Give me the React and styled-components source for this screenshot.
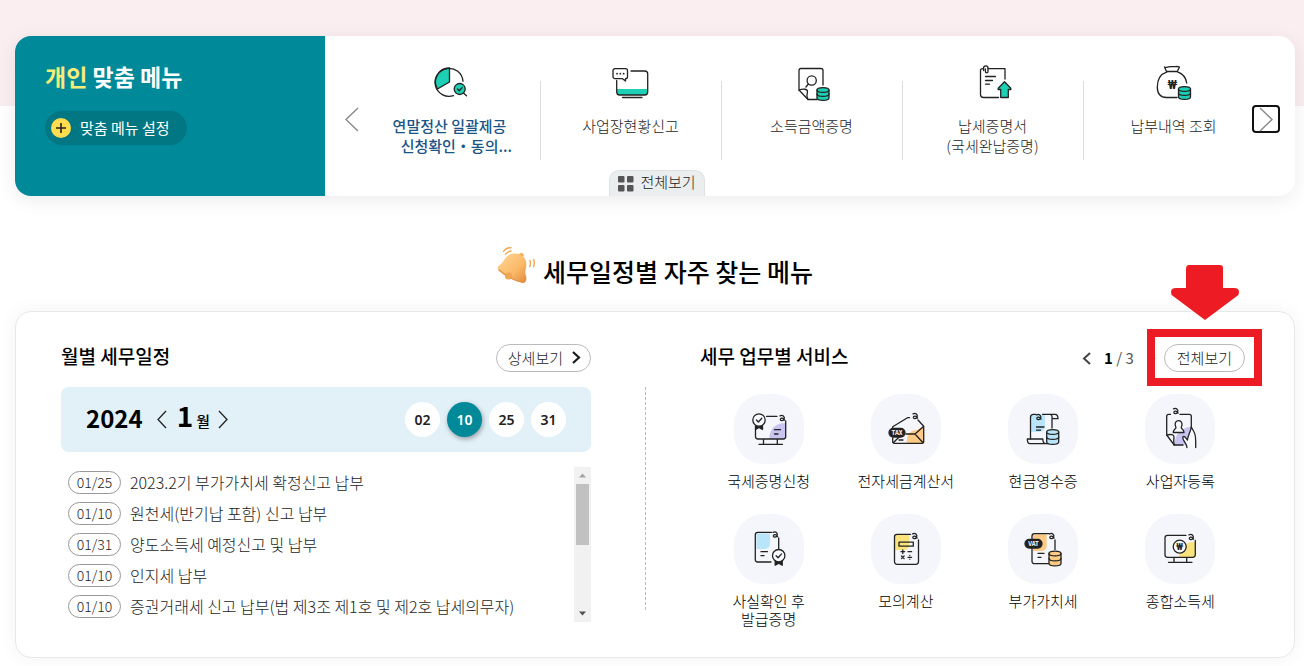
import styled, { createGlobalStyle, css, ThemeProvider } from 'styled-components';

const theme = {
  colors: {
    teal: '#008998',
    tealDark: '#007783',
    yellow: '#ffdd4f',
    ink: '#222222',
    text: '#1c1c1c',
    blue: '#1b5486',
    sky: '#e2f0f8',
    bubble: '#f5f6fb',
    red: '#ed1c24',
  },
};

const line = {
  fill: 'none',
  stroke: '#222',
  strokeWidth: 1.3,
  strokeLinecap: 'round',
  strokeLinejoin: 'round',
};

/* shared icon parts */

const Coins = ({ x, y, h = 9, color = '#1dcfb4' }) => (
  <g fill={color}>
    <path
      d={`M${x - 6} ${y}v${h}c0 3.2 12 3.2 12 0v-${h}`}
    />
    <ellipse cx={x} cy={y} rx="6" ry="2.4" />
    <path
      fill="none"
      d={`M${x - 6} ${y + h / 2}c0 3.2 12 3.2 12 0`}
    />
  </g>
);

const Curl = ({ x, y }) => (
  <path
    d={`M${x - 2.5} ${y - 2.6}c3-1.4 5.200 1 4 3.400c-1.200 2-4 1.600-3.600-.2c.3-1.600 3-1.400 4.200 1`}
  />
);

const Medal = ({ x, y }) => (
  <g>
    <path
      fill="#222"
      d={`M${x - 3.500} ${y + 5}v4.500l3.500-2l3.500 2v-4.500z`}
    />
    <circle cx={x} cy={y} r="6.200" fill="#f9fafd" />
    <path d={`M${x - 2.600} ${y}l2 2l3.400-3.800`} />
  </g>
);

const Won = ({ x, y, size }) => (
  <text
    x={x}
    y={y}
    fontFamily="Roboto, sans-serif"
    fontSize={size}
    fontWeight="700"
    textAnchor="middle"
    fill="#222"
    stroke="none"
  >
    ₩
  </text>
);

const PieIcon = () => (
  <svg width="40" height="40" viewBox="0 0 40 40" {...line}>
    <path fill="#1dcfb4" d="M19.500 20V6A14 14 0 0 0 7.400 27z" />
    <path d="M33 19.300A14 14 0 1 0 23.500 33.600" />
    <circle cx="29.700" cy="27" r="5.500" fill="#1dcfb4" />
    <path d="M33.500 31l3 2.800M27.500 27l1.700 1.700l2.800-3" />
  </svg>
);

const BusinessIcon = () => (
  <svg width="40" height="40" viewBox="0 0 40 40" {...line}>
    <path fill="#1dcfb4" stroke="none" d="M6 27h30.500v3a3 3 0 0 1-3 3H9a3 3 0 0 1-3-3z" />
    <path d="M5.700 18.500V30a3 3 0 0 0 3 3h25a3 3 0 0 0 3-3V12a3 3 0 0 0-3-3H20M11.500 35.500h19.500" />
    <path d="M4 6.700h10.500a2 2 0 0 1 2 2v6a2 2 0 0 1-2 2v2.400l-3-2.400H4a2 2 0 0 1-2-2v-6a2 2 0 0 1 2-2z" />
    <path strokeWidth="1.700" d="M6 11.700h.1M9.300 11.700h.1M12.600 11.700h.1" />
  </svg>
);

const IncomeIcon = () => (
  <svg width="40" height="40" viewBox="0 0 40 40" {...line}>
    <path d="M31 23V8.500a2 2 0 0 0-2-2H9a2 2 0 0 0-2 2V28l9 9.500h9" />
    <path d="M7 28c4-1.500 8.500-1 8.500 1.500c-.8 2.500-1 5 .5 8" />
    <circle cx="19.700" cy="18.500" r="4.600" />
    <path d="M16.400 22l-2.500 3" />
    <Coins x={31} y={28} h={8} />
  </svg>
);

const TaxPaperIcon = () => (
  <svg width="40" height="40" viewBox="0 0 40 40" {...line}>
    <path d="M9.500 6.700a2 2 0 0 0-2 2v23.800a3 3 0 0 0 3 3h15M15 6.700h17V17" />
    <path d="M10.600 8.500V6a2.200 2.200 0 0 1 4.400 0v3.600a1.300 1.300 0 0 1-2.600 0V7" />
    <path d="M12.500 14.500h10M12.500 18.500h7M12.500 22.200h4" />
    <path fill="#1dcfb4" d="M31.500 19.700l6.300 6.500v1.300h-2.500v8h-7.600v-8h-2.500v-1.300z" />
  </svg>
);

const MoneyBagIcon = () => (
  <svg width="40" height="40" viewBox="0 0 40 40" {...line}>
    <path d="M12.500 9.500L10.500 5c3 1.200 4.500-.8 7.500-.4c3 .4 4.500-.8 7.500.4l-2.200 4.500z" />
    <path d="M13 9.800C6.500 12 3.300 18 3.300 25c0 7 3.500 10.500 9.200 10.500H23M23.500 9.800c5 1.700 8.500 6 9.200 11.200" />
    <Won x={18.3} y={26.5} size={12} />
    <Coins x={30.500} y={27} h={8} />
  </svg>
);

/* service icons share a 70 x 70 bubble */

const CertificateIcon = () => (
  <svg viewBox="0 0 70 70" {...line}>
    <path fill="#c9c3f0" stroke="none" d="M35.300 45c0-10 6-16 16.400-16v16z" />
    <path d="M32.500 22.300H43M51.700 27v15.500a2.500 2.500 0 0 1-2.500 2.500H24a2.500 2.500 0 0 1-2.500-2.500V35M29.500 45v5.300M43.300 45v5.300M25 50.300h23.500M40.500 35.700h6M40.500 40h3.500" />
    <Curl x={48.500} y={24.500} />
    <Medal x={25} y={26} />
  </svg>
);

const TaxInvoiceIcon = () => (
  <svg viewBox="0 0 70 70" {...line}>
    <path fill="#ffca85" stroke="none" d="M35.700 49.300c0-8 3-13 9.500-13l7.500-4v17z" />
    <path d="M21.700 34v-1.300L36.500 23.700l2 0M47 26l5.700 6.300v15a2 2 0 0 1-2 2H23.700a2 2 0 0 1-2-2V44" />
    <path d="M35 40h9l8.500-7.500M44 40l8 8.700M22.300 48.700l6-6M28 46h4" />
    <Curl x={44.500} y={22.500} />
    <rect x="18" y="34.500" width="16" height="8.500" rx="4.200" fill="#222" />
    <text x="26" y="41" fontSize="6" fontWeight="700" textAnchor="middle" fill="#fff" stroke="none">TAX</text>
  </svg>
);

const CashReceiptIcon = () => (
  <svg viewBox="0 0 70 70" {...line}>
    <path fill="#b9e5fa" stroke="none" d="M23 21h14v11a6 6 0 0 1-6 6h-8z" />
    <path d="M28 20.300h-2.500a3 3 0 0 0-3 3V45M34.500 20.300H47c2 0 3 2 3 4.400h-5.800c0-2.400-.6-3.800-1.700-4.400M44 25v9M28.500 33h7.500M28.500 36.200h4" />
    <path d="M19.300 45h15.500c0 3 1 4.700 3 4.700H22c-2 0-2.700-2-2.700-4.700zM37 49.700h3" />
    <Curl x={31} y={23.500} />
    <Coins x={44.700} y={38} h={10} color="#b9e5fa" />
  </svg>
);

const BusinessRegisterIcon = () => (
  <svg viewBox="0 0 70 70" {...line}>
    <path fill="#c9c3f0" stroke="none" d="M29.500 51c0-10 6-18 17-18v8l2 10z" />
    <path d="M25.500 20.300h-1.800a2 2 0 0 0-2 2V41l7.500 10H38M35 20.300h9.300a2 2 0 0 1 2 2V34" />
    <path d="M21.700 41c4-1 7.300-.5 7.300 2c-.5 3-.5 5 .2 8" />
    <path fill="#f9fafd" d="M33.500 26.700c2.400 0 3.700 2 3.500 4c-.2 1.800-1.200 2.300-.6 3.500c1 1.400 2.600 1.600 2.600 4.300H28.200c0-2.700 1.600-2.900 2.600-4.300c.6-1.200-.4-1.700-.6-3.500c-.2-2 1-4 3.300-4z" />
    <path
      fill="#f9fafd"
      d="M42 53.500c0-3-2-4.500-3.500-7.500c-.8-1.800-1.200-3.500.3-3.700c1.200 0 2 1.700 3.700 3.700c0-3 1.300-5 2.200-7.500c.8-2 1.500-3.700 1.600-5.500l2.500 4.500c1.700 2.800 1.900 6 1.900 10v6"
    />
    <Curl x={31} y={17.500} />
  </svg>
);

const FactCheckIcon = () => (
  <svg viewBox="0 0 70 70" {...line}>
    <path fill="#b9e5fa" stroke="none" d="M22.500 19.500H36V30a5 5 0 0 1-5 5h-8.500z" />
    <path d="M37.500 18.300H23.800a2.500 2.500 0 0 0-2.500 2.500v24.700a2.500 2.500 0 0 0 2.500 2.500H37M44.700 24v10.500M27 37.700h6.500M27 41.700h3" />
    <Curl x={41.500} y={21} />
    <Medal x={44.700} y={41.700} />
  </svg>
);

const CalculatorIcon = () => (
  <svg viewBox="0 0 70 70" {...line}>
    <path fill="#fae27c" stroke="none" d="M24 21h14.300v10a5 5 0 0 1-5 5H24z" />
    <path d="M39.500 20.300H26a2.500 2.500 0 0 0-2.500 2.500v25a2.500 2.500 0 0 0 2.500 2.500h19a2.500 2.500 0 0 0 2.500-2.500V26" />
    <rect x="28" y="28.200" width="14.300" height="4" />
    <path d="M30 37.700h3.600M31.800 35.900v3.600M37 37.700h3.600M30.500 42l2.600 2.600M33.100 42l-2.600 2.600M37 43.300h3.600M38.800 41.500v.1M38.800 45.100v.1" />
    <Curl x={44} y={22.500} />
  </svg>
);

const VatIcon = () => (
  <svg viewBox="0 0 70 70" {...line}>
    <path fill="#ffca85" stroke="none" d="M25 20.300h13.700V32a5 5 0 0 1-5 5H25z" />
    <path d="M41 19.700H26.500a2.500 2.500 0 0 0-2.500 2.500V25M24 34.500v12.700a2.500 2.500 0 0 0 2.500 2.500h14M47 26v9.500M30 39.300h6M30 43.300h3" />
    <Curl x={44} y={22.500} />
    <rect x="17" y="25.500" width="17" height="8.500" rx="4.200" fill="#222" />
    <text x="25.500" y="32" fontSize="6" fontWeight="700" textAnchor="middle" fill="#fff" stroke="none">VAT</text>
    <Coins x={47} y={39.500} h={10} color="#ffca85" />
  </svg>
);

const IncomeTaxIcon = () => (
  <svg viewBox="0 0 70 70" {...line}>
    <path fill="#fae27c" stroke="none" d="M34 43.300c0-9 6-15.500 16-15.500v15.500z" />
    <path d="M41 21.300H22.500a2.500 2.500 0 0 0-2.500 2.500v17a2.500 2.500 0 0 0 2.500 2.500h25.300a2.500 2.500 0 0 0 2.500-2.500V26.500M29 43.300v5M41.700 43.300v5M23.500 48.300H47" />
    <Curl x={46.500} y={23.500} />
    <circle cx="34.700" cy="32.700" r="6.500" fill="#f9fafd" />
    <Won x={34.7} y={35.9} size={9} />
  </svg>
);

const BellIcon = () => (
  <svg width="40" height="40" viewBox="0 0 40 40">
    <defs>
      <linearGradient id="bell" x1="0" y1="0" x2="1" y2="1">
        <stop offset="0" stopColor="#ffd694" />
        <stop offset="0.6" stopColor="#fbb968" />
        <stop offset="1" stopColor="#dd8a3a" />
      </linearGradient>
    </defs>
    <circle cx="24.300" cy="9.300" r="2.400" fill="#f3a950" />
    <path
      fill="url(#bell)"
      d="M1 23.500c-.8-2.500.5-3.500 3-5.500c3-2.500 3.500-6.500 8-9c4-2 9-2 13 .5c4 3 5 7.500 4 12c-.8 4-1 6 .2 9c.7 3-.2 5.800-2.700 6.500C20 36 5 29 1 23.500z"
    />
    <path fill="none" stroke="#dd9145" strokeWidth="1.200" d="M1.500 23.500c6 5.500 16 11.500 25 13" />
    <circle cx="11.500" cy="30" r="3.600" fill="#f0a552" />
    <g fill="none" stroke="#efa950" strokeWidth="1.400" strokeLinecap="round">
      <path d="M6.500 5.500C8 3 11 1.500 14 1.700M8.500 8.200c1.500-2 3.500-3 5.500-3.200M33 14.500c.6 2 .5 4-.2 6M36.700 13.500c.8 2.500.7 5-.2 7" />
    </g>
  </svg>
);

const Chevron = ({ left, width, height, weight = 2 }) => (
  <svg width={width} height={height} viewBox={`0 0 ${width} ${height}`}>
    <path
      fill="none"
      stroke="currentColor"
      strokeWidth={weight}
      d={
        left
          ? `M${width - 1} 1L2 ${height / 2}L${width - 1} ${height - 1}`
          : `M1 1L${width - 2} ${height / 2}L1 ${height - 1}`
      }
    />
  </svg>
);

const quickMenus = [
  { icon: PieIcon, lines: ['연말정산 일괄제공', '\u00a0\u00a0\u00a0\u00a0신청확인・동의...'], active: true },
  { icon: BusinessIcon, lines: ['사업장현황신고'] },
  { icon: IncomeIcon, lines: ['소득금액증명'] },
  { icon: TaxPaperIcon, lines: ['납세증명서', '(국세완납증명)'] },
  { icon: MoneyBagIcon, lines: ['납부내역 조회'] },
];

const schedules = [
  { date: '01/25', title: '2023.2기 부가가치세 확정신고 납부' },
  { date: '01/10', title: '원천세(반기납 포함) 신고 납부' },
  { date: '01/31', title: '양도소득세 예정신고 및 납부' },
  { date: '01/10', title: '인지세 납부' },
  { date: '01/10', title: '증권거래세 신고 납부(법 제3조 제1호 및 제2호 납세의무자)' },
];

const services = [
  { icon: CertificateIcon, lines: ['국세증명신청'] },
  { icon: TaxInvoiceIcon, lines: ['전자세금계산서'] },
  { icon: CashReceiptIcon, lines: ['현금영수증'] },
  { icon: BusinessRegisterIcon, lines: ['사업자등록'] },
  { icon: FactCheckIcon, lines: ['사실확인 후', '발급증명'] },
  { icon: CalculatorIcon, lines: ['모의계산'] },
  { icon: VatIcon, lines: ['부가가치세'] },
  { icon: IncomeTaxIcon, lines: ['종합소득세'] },
];

const App = () => (
  <ThemeProvider theme={theme}>
    <GlobalStyle />
    <Page>
      <QuickCard>
        <Intro>
          <IntroTitle>
            <em>개인</em> 맞춤 메뉴
          </IntroTitle>
          <SettingButton type="button">
            <PlusMark>
              <svg width="10" height="10" viewBox="0 0 10 10">
                <path d="M5 0v10M0 5h10" stroke="#222" strokeWidth="1.600" />
              </svg>
            </PlusMark>
            맞춤 메뉴 설정
          </SettingButton>
        </Intro>
        <Carousel>
          <ArrowButton type="button" aria-label="이전">
            <Chevron left width={15} height={25} weight={1.4} />
          </ArrowButton>
          <QuickList>
            {quickMenus.map(({ icon: Icon, lines, active }) => (
              <QuickItem key={lines[0]}>
                <QuickLink href="#menu" $active={active}>
                  <Icon />
                  {lines.map((text) => (
                    <span key={text}>{text}</span>
                  ))}
                </QuickLink>
              </QuickItem>
            ))}
          </QuickList>
          <ArrowButton type="button" aria-label="다음" $focused>
            <Chevron width={15} height={25} weight={1.4} />
          </ArrowButton>
        </Carousel>
        <AllTab type="button">
          <svg width="16" height="16" viewBox="0 0 16 16" fill="#555">
            <rect width="6.500" height="6.500" rx="1" />
            <rect x="9" width="6.500" height="6.500" rx="1" />
            <rect y="9" width="6.500" height="6.500" rx="1" />
            <rect x="9" y="9" width="6.500" height="6.500" rx="1" />
          </svg>
          <span>전체보기</span>
        </AllTab>
      </QuickCard>

      <SectionTitle>
        <BellIcon />
        세무일정별 자주 찾는 메뉴
      </SectionTitle>

      <Panel>
        <section>
          <PanelHead>
            <h3>월별 세무일정</h3>
            <PillButton type="button">
              상세보기
              <Chevron width={9} height={13} weight={2.2} />
            </PillButton>
          </PanelHead>
          <DateBar>
            <Year>2024</Year>
            <MonthArrow type="button" aria-label="이전 달">
              <Chevron left width={11} height={19} weight={1.3} />
            </MonthArrow>
            <Month>
              1<small>월</small>
            </Month>
            <MonthArrow type="button" aria-label="다음 달">
              <Chevron width={11} height={19} weight={1.3} />
            </MonthArrow>
            <Days>
              {['02', '10', '25', '31'].map((day) => (
                <Day key={day} type="button" $active={day === '10'}>
                  {day}
                </Day>
              ))}
            </Days>
          </DateBar>
          <ScheduleBox>
            <ScheduleList>
              {schedules.map(({ date, title }) => (
                <ScheduleItem key={title}>
                  <DateBadge>{date}</DateBadge>
                  <a href="#schedule">{title}</a>
                </ScheduleItem>
              ))}
            </ScheduleList>
            <Scrollbar aria-hidden="true">
              <svg width="17" height="17" viewBox="0 0 17 17">
                <path d="M5 10.500l3.500-4l3.500 4z" fill="#a3a3a3" />
              </svg>
              <Thumb />
              <svg width="17" height="17" viewBox="0 0 17 17">
                <path d="M5 6.500l3.500 4l3.500-4z" fill="#505050" />
              </svg>
            </Scrollbar>
          </ScheduleBox>
        </section>

        <Divider />

        <section>
          <PanelHead $tight>
            <h3>세무 업무별 서비스</h3>
            <Pager>
              <PagerArrow type="button" aria-label="이전 페이지">
                <Chevron left width={9} height={13} weight={2} />
              </PagerArrow>
              <Count>
                <strong>1</strong> / 3
              </Count>
              <PagerArrow type="button" aria-label="다음 페이지">
                <Chevron width={9} height={13} weight={2} />
              </PagerArrow>
              <Highlighted>
                <PillButton type="button">전체보기</PillButton>
                <RedFrame />
                <RedArrow width="68" height="55" viewBox="0 0 68 55">
                  <path d="M18 0h31q3 0 3 3v20h11q5 0 5 4q0 3-2 4L34 55L2 31q-2-1-2-4q0-4 5-4h10V4q0-4 3-4z" />
                </RedArrow>
              </Highlighted>
            </Pager>
          </PanelHead>
          <ServiceGrid>
            {services.map(({ icon: Icon, lines }) => (
              <li key={lines[0]}>
                <ServiceLink href="#service">
                  <Bubble>
                    <Icon />
                  </Bubble>
                  {lines.map((text) => (
                    <span key={text}>{text}</span>
                  ))}
                </ServiceLink>
              </li>
            ))}
          </ServiceGrid>
        </section>
      </Panel>
    </Page>
  </ThemeProvider>
);

const GlobalStyle = createGlobalStyle`
  * {
    box-sizing: border-box;
  }

  body {
    margin: 0;
    color: ${theme.colors.text};
    font-family: 'Noto Sans CJK KR', sans-serif;
    font-size: 15px;
    font-weight: 300;
    line-height: 20px;
  }

  h2, h3, ul {
    margin: 0;
    padding: 0;
  }

  ul {
    list-style: none;
  }

  a {
    color: inherit;
    text-decoration: none;
  }

  strong {
    font-weight: 700;
  }

  button {
    padding: 0;
    border: 0;
    background: none;
    color: inherit;
    font: inherit;
    cursor: pointer;
  }

  svg {
    display: block;
    flex: none;
  }
`;

const Page = styled.main`
  padding: 36px 9px 8px 15px;
  background: linear-gradient(#faeef0 106px, #fff 106px);
`;

const QuickCard = styled.section`
  position: relative;
  display: flex;
  border-radius: 16px;
  background: #fff;
  box-shadow: 0 4px 20px rgba(0, 0, 0, 0.08);
`;

const Intro = styled.div`
  flex: none;
  width: 310px;
  padding: 26px 30px;
  border-radius: 16px 0 0 16px;
  background: ${({ theme }) => theme.colors.teal};
`;

const IntroTitle = styled.h2`
  margin-bottom: 21px;
  color: #fff;
  font-size: 23px;
  font-weight: 700;
  line-height: 28px;

  em {
    color: #f6ec7a;
    font-style: normal;
  }
`;

const SettingButton = styled.button`
  display: flex;
  align-items: center;
  gap: 9px;
  height: 34px;
  padding: 0 17px 0 6px;
  border-radius: 17px;
  background: ${({ theme }) => theme.colors.tealDark};
  color: #fff;
  font-weight: 400;
`;

const PlusMark = styled.span`
  display: flex;
  align-items: center;
  justify-content: center;
  width: 20px;
  height: 20px;
  border-radius: 50%;
  background: ${({ theme }) => theme.colors.yellow};
`;

const Carousel = styled.div`
  flex: 1;
  display: grid;
  grid-template-columns: 34px minmax(0, 1fr) 31px;
  padding-top: 26px;
`;

const ArrowButton = styled.button`
  display: flex;
  align-items: center;
  justify-content: flex-end;
  justify-self: end;
  width: 28px;
  height: 28px;
  margin-top: 43px;
  color: #888;

  ${({ $focused }) =>
    $focused &&
    css`
      justify-content: center;
      margin-right: 15px;
      border: 2px solid #111;
      border-radius: 4px;
      z-index: 1;
    `}
`;

const QuickList = styled.ul`
  display: grid;
  grid-template-columns: repeat(5, minmax(0, 1fr));
  height: 134px;
`;

const QuickItem = styled.li`
  & + & {
    background: linear-gradient(#ddd, #ddd) no-repeat 0 19px / 1px 79px;
  }
`;

const QuickLink = styled.a`
  display: flex;
  flex-direction: column;
  align-items: center;

  svg {
    margin-bottom: 14px;
  }

  ${({ $active, theme }) =>
    $active &&
    css`
      color: ${theme.colors.blue};
      font-weight: 500;
    `}
`;

const AllTab = styled.button`
  position: absolute;
  bottom: 0;
  left: 50%;
  display: flex;
  align-items: center;
  justify-content: center;
  gap: 6px;
  width: 96px;
  height: 26px;
  border: 1px solid #dde3e4;
  border-bottom: 0;
  border-radius: 10px 10px 0 0;
  background: #eaeeef;
  transform: translateX(-46px);

  span {
    padding-bottom: 3px;
  }
`;

const SectionTitle = styled.h2`
  display: flex;
  align-items: flex-start;
  justify-content: center;
  gap: 6px;
  margin: 50px 0 14px;
  color: #000;
  font-size: 25px;
  font-weight: 500;
  line-height: 51px;
`;

const Panel = styled.div`
  display: grid;
  grid-template-columns: minmax(0, 530fr) 1px minmax(0, 549fr);
  column-gap: 54px;
  padding: 32px 45px 29px;
  border: 1px solid #e8e8e8;
  border-radius: 16px;
  background: #fff;
  box-shadow: 0 0 20px rgba(0, 0, 0, 0.05);
`;

const PanelHead = styled.div`
  display: flex;
  align-items: center;
  justify-content: space-between;
  height: 28px;
  margin-bottom: ${({ $tight }) => ($tight ? '22px' : '15px')};

  h3 {
    padding-bottom: 4px;
    color: #000;
    font-size: 19px;
    font-weight: 500;
    line-height: 24px;
  }
`;

const PillButton = styled.button`
  display: flex;
  align-items: center;
  gap: 9px;
  height: 28px;
  padding: 0 9px 1px 11px;
  border: 1px solid #bbb;
  border-radius: 14px;
  background: #fff;
  color: ${({ theme }) => theme.colors.text};
`;

const DateBar = styled.div`
  display: flex;
  align-items: center;
  height: 65px;
  margin-bottom: 15px;
  padding: 0 25px;
  border-radius: 8px;
  background: ${({ theme }) => theme.colors.sky};
  color: #000;
`;

const Year = styled.strong`
  margin-right: 13px;
  padding-bottom: 3px;
  font-size: 24px;
  line-height: 32px;
`;

const Month = styled.strong`
  display: flex;
  align-items: baseline;
  gap: 3px;
  margin: 0 8px 0 10px;
  padding-bottom: 3px;
  font-size: 28px;
  line-height: 32px;

  small {
    font-size: 15px;
    font-weight: 500;
  }
`;

const MonthArrow = styled.button`
  color: #222;
`;

const Days = styled.div`
  display: flex;
  gap: 7px;
  margin-left: auto;
`;

const Day = styled.button`
  width: 35px;
  height: 35px;
  border-radius: 50%;
  background: #fff;
  color: ${({ theme }) => theme.colors.ink};
  font-family: 'Noto Sans', sans-serif;
  font-size: 14px;
  font-weight: 600;

  ${({ $active, theme }) =>
    $active &&
    css`
      background: ${theme.colors.teal};
      box-shadow: 1px 2px 5px rgba(0, 0, 0, 0.35);
      color: #fff;
    `}
`;

const ScheduleBox = styled.div`
  display: flex;
`;

const ScheduleList = styled.ul`
  flex: 1;
  min-width: 0;
  padding-left: 7px;
`;

const ScheduleItem = styled.li`
  display: flex;
  align-items: center;
  gap: 9px;
  height: 31px;
  font-size: 16px;
  white-space: nowrap;

  a {
    padding-bottom: 2px;
  }
`;

const DateBadge = styled.span`
  width: 53px;
  height: 23px;
  border: 1px solid #999;
  border-radius: 12px;
  font-size: 14px;
  line-height: 21px;
  text-align: center;
`;

const Scrollbar = styled.div`
  display: flex;
  flex-direction: column;
  width: 17px;
  background: #f1f1f1;

  svg:last-child {
    margin-top: auto;
  }
`;

const Thumb = styled.div`
  height: 61px;
  margin: 0 2px;
  background: #c1c1c1;
`;

const Divider = styled.div`
  margin: 43px 0 16px;
  background: repeating-linear-gradient(#bbb 0 3px, transparent 3px 5px);
`;

const Pager = styled.div`
  display: flex;
  align-items: center;
  margin-right: 4px;
`;

const PagerArrow = styled.button`
  color: #444;
`;

const Count = styled.span`
  margin: 0 13px;
  color: #555;
  font-weight: 400;

  strong {
    color: #000;
  }
`;

const Highlighted = styled.div`
  position: relative;
  margin-left: 8px;

  button {
    padding: 0 12px 1px;
  }
`;

const RedFrame = styled.div`
  position: absolute;
  inset: -15px -17px -14px -17px;
  border: 8px solid ${({ theme }) => theme.colors.red};
  pointer-events: none;
`;

const RedArrow = styled.svg`
  position: absolute;
  bottom: 52px;
  left: 7px;
  fill: ${({ theme }) => theme.colors.red};
`;

const ServiceGrid = styled.ul`
  display: grid;
  grid-template-columns: repeat(4, minmax(0, 1fr));
  row-gap: 12px;

  li {
    min-height: 108px;
  }
`;

const ServiceLink = styled.a`
  display: flex;
  flex-direction: column;
  align-items: center;
  color: #000;
  line-height: 18px;
`;

const Bubble = styled.span`
  width: 70px;
  height: 70px;
  margin-bottom: 8px;
  border-radius: 30px;
  background: ${({ theme }) => theme.colors.bubble};
`;

export default App;
